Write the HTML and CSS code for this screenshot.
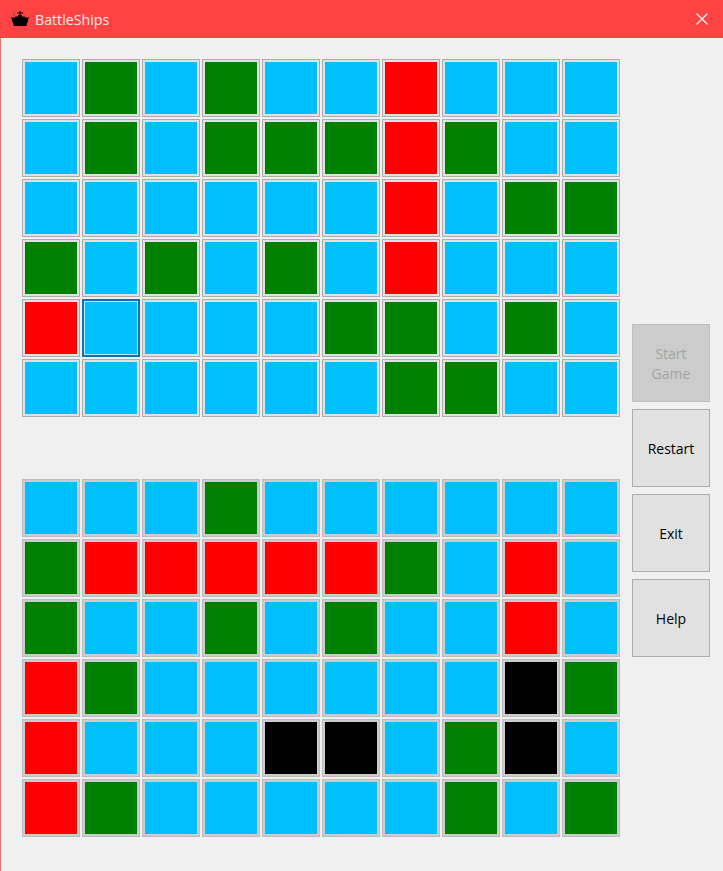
FILE: index.html
```html
<!DOCTYPE html>
<html lang="en">
<head>
    <meta charset="UTF-8">
    <meta name="viewport" content="width=device-width, initial-scale=1.0">
    <title>BattleShips</title>
    <link rel="stylesheet" href="styles.css">
</head>
<body>
    <header class="title-bar">
        <svg class="ship-icon" viewBox="0 0 18 16" width="18" height="16">
            <path d="M8.6 0h1v1.4h2.6v1H9.6V4h1.2v1.4h3v1.2H18l-.6 1.6L15.4 15H3L.6 8.2 0 6.600h4.200V5.400h3V4h1.400V2.400H6.400v-1h2.200z" fill="#000"/>
            <rect x="2.500" y="1.500" width="1" height="3.500" fill="#a02a2a"/>
        </svg>
        <span class="title-text">BattleShips</span>
        <svg class="close-icon" viewBox="0 0 12 12" width="12" height="12">
            <path d="M.5.5l11 11M11.500.5l-11 11" stroke="#fff" stroke-width="1.100" fill="none"/>
        </svg>
    </header>
    <main class="window">
        <div class="boards">
            <div class="board">
                <button class="cell sea"></button><button class="cell ship"></button><button class="cell sea"></button><button class="cell ship"></button><button class="cell sea"></button><button class="cell sea"></button><button class="cell hit"></button><button class="cell sea"></button><button class="cell sea"></button><button class="cell sea"></button>
                <button class="cell sea"></button><button class="cell ship"></button><button class="cell sea"></button><button class="cell ship"></button><button class="cell ship"></button><button class="cell ship"></button><button class="cell hit"></button><button class="cell ship"></button><button class="cell sea"></button><button class="cell sea"></button>
                <button class="cell sea"></button><button class="cell sea"></button><button class="cell sea"></button><button class="cell sea"></button><button class="cell sea"></button><button class="cell sea"></button><button class="cell hit"></button><button class="cell sea"></button><button class="cell ship"></button><button class="cell ship"></button>
                <button class="cell ship"></button><button class="cell sea"></button><button class="cell ship"></button><button class="cell sea"></button><button class="cell ship"></button><button class="cell sea"></button><button class="cell hit"></button><button class="cell sea"></button><button class="cell sea"></button><button class="cell sea"></button>
                <button class="cell hit"></button><button class="cell sea focused"></button><button class="cell sea"></button><button class="cell sea"></button><button class="cell sea"></button><button class="cell ship"></button><button class="cell ship"></button><button class="cell sea"></button><button class="cell ship"></button><button class="cell sea"></button>
                <button class="cell sea"></button><button class="cell sea"></button><button class="cell sea"></button><button class="cell sea"></button><button class="cell sea"></button><button class="cell sea"></button><button class="cell ship"></button><button class="cell ship"></button><button class="cell sea"></button><button class="cell sea"></button>
            </div>
            <div class="board lower">
                <button class="cell sea"></button><button class="cell sea"></button><button class="cell sea"></button><button class="cell ship"></button><button class="cell sea"></button><button class="cell sea"></button><button class="cell sea"></button><button class="cell sea"></button><button class="cell sea"></button><button class="cell sea"></button>
                <button class="cell ship"></button><button class="cell hit"></button><button class="cell hit"></button><button class="cell hit"></button><button class="cell hit"></button><button class="cell hit"></button><button class="cell ship"></button><button class="cell sea"></button><button class="cell hit"></button><button class="cell sea"></button>
                <button class="cell ship"></button><button class="cell sea"></button><button class="cell sea"></button><button class="cell ship"></button><button class="cell sea"></button><button class="cell ship"></button><button class="cell sea"></button><button class="cell sea"></button><button class="cell hit"></button><button class="cell sea"></button>
                <button class="cell hit"></button><button class="cell ship"></button><button class="cell sea"></button><button class="cell sea"></button><button class="cell sea"></button><button class="cell sea"></button><button class="cell sea"></button><button class="cell sea"></button><button class="cell sunk"></button><button class="cell ship"></button>
                <button class="cell hit"></button><button class="cell sea"></button><button class="cell sea"></button><button class="cell sea"></button><button class="cell sunk"></button><button class="cell sunk"></button><button class="cell sea"></button><button class="cell ship"></button><button class="cell sunk"></button><button class="cell sea"></button>
                <button class="cell hit"></button><button class="cell ship"></button><button class="cell sea"></button><button class="cell sea"></button><button class="cell sea"></button><button class="cell sea"></button><button class="cell sea"></button><button class="cell ship"></button><button class="cell sea"></button><button class="cell ship"></button>
            </div>
        </div>
        <div class="controls">
            <button class="control" disabled>Start Game</button>
            <button class="control">Restart</button>
            <button class="control">Exit</button>
            <button class="control">Help</button>
        </div>
    </main>
</body>
</html>
```

FILE: styles.css
```css
html, body {
    height: 100%;
}

body {
    margin: 0;
    display: flex;
    flex-direction: column;
    background-color: #f0f0f0;
    font-family: "Open Sans", "Noto Sans", Arial, sans-serif;
    overflow: hidden;
}

.title-bar {
    height: 38px;
    flex-shrink: 0;
    display: flex;
    align-items: center;
    padding: 0 15px 0 11px;
    background-color: #ff4343;
    color: #fff;
}

.ship-icon {
    margin: 0 6px 0 0;
}

.title-text {
    flex: 1;
    font-size: 14.2px;
    color: #ffe9e9;
}

.window {
    flex: 1;
    display: flex;
    border-left: 1px solid #e87070;
    padding: 21px 0 0 21px;
}

.boards {
    display: flex;
    flex-direction: column;
    gap: 62px;
}

.board {
    display: grid;
    grid-template-columns: repeat(10, 58px);
    grid-auto-rows: 58px;
    gap: 2px;
}

.cell {
    margin: 0;
    padding: 0;
    border: 1px solid #adadad;
    box-shadow: inset 0 0 0 2px #e1e1e1;
}

.lower .cell {
    border-color: #bcbcbc;
    box-shadow: inset 0 0 0 2px #cccccc;
}

.sea {
    background-color: #00bfff;
}

.ship {
    background-color: #008000;
}

.hit {
    background-color: #ff0000;
}

.sunk {
    background-color: #000000;
}

.cell.focused {
    border: 2px solid #0f6fb8;
    box-shadow: inset 0 0 0 1px #bdeaff;
}

.controls {
    display: flex;
    flex-direction: column;
    gap: 7px;
    margin-left: 12px;
    padding-top: 265px;
}

.control {
    width: 78px;
    height: 78px;
    padding: 2px 12px 0;
    border: 1px solid #adadad;
    background-color: #e1e1e1;
    color: #000;
    font-family: inherit;
    font-size: 14px;
    line-height: 20px;
}

.control:disabled {
    border-color: #bfbfbf;
    background-color: #cccccc;
    color: #a3a3a3;
}
```
